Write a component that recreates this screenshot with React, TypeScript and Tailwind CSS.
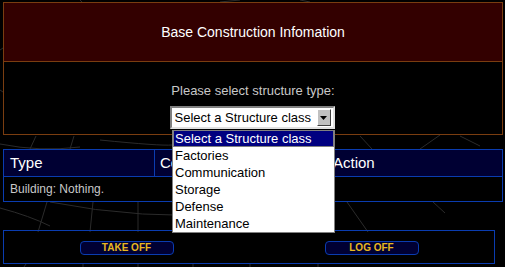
const options = [
  "Select a Structure class",
  "Factories",
  "Communication",
  "Storage",
  "Defense",
  "Maintenance",
];

// faint wireframe globe behind the page
function Backdrop() {
  return (
    <svg
      className="pointer-events-none absolute inset-0"
      width="505"
      height="267"
      viewBox="0 0 505 267"
      fill="none"
      stroke="#2b2b2b"
      strokeWidth="1"
    >
      <path d="M0 208 Q30 216 50 226" />
      <path d="M50 202 Q140 220 240 214 T333 206" />
      <path d="M47 202 L38 232" />
      <path d="M93 202 L90 232" />
      <path d="M138 202 L138 232" />
      <path d="M347 202 L368 232" />
      <path d="M433 202 L445 213" />
      <path d="M0 144 Q40 152 80 147" />
      <path d="M30 149 L36 136" />
      <path d="M70 149 L74 136" />
      <path d="M100 140 Q160 146 172 145" />
      <path d="M360 136 L372 149" />
      <path d="M420 149 L440 135" />
      <path d="M460 136 L480 146" />
      <path d="M24 267 L26 264" />
      <path d="M83 267 L83 264" />
      <path d="M138 267 L138 264" />
      <path d="M193 267 L193 264" />
      <path d="M250 267 L250 264" />
      <path d="M318 267 L318 264" />
      <path d="M0 90 L3 92" />
      <path d="M0 50 L3 48" />
      <path d="M80 0 L82 2" />
      <path d="M220 2 L240 0" />
      <path d="M300 0 L310 2" />
    </svg>
  );
}

function NavButton({ label }: { label: string }) {
  return (
    <button className="flex h-[14px] w-[94px] items-center justify-center rounded-[4px] border border-[#0a3cb0] bg-[#000033] text-[10px] font-bold leading-none text-[#e8b820]">
      {label}
    </button>
  );
}

export default function App() {
  return (
    <div className="relative h-[267px] w-[505px] overflow-hidden bg-black font-['Liberation_Sans',Arial,sans-serif]">
      <Backdrop />

      <div className="relative flex flex-col px-[3px] pt-[2px]">
        {/* construction panel */}
        <div className="flex h-[133px] w-[500px] flex-col border border-[#7a3d10]">
          <div className="flex h-[59px] items-center justify-center border-b border-[#7a3d10] bg-[#330000] pt-[1px] text-[14px] text-white">
            Base Construction Infomation
          </div>
          <div className="flex flex-1 flex-col items-center bg-black pt-[21px]">
            <p className="text-[13px] leading-[15px] text-[#c8c8c8]">
              Please select structure type:
            </p>
            <div className="mt-[8px] ml-[-2px] flex h-[23px] w-[165px] items-center border-2 border-t-[#808080] border-l-[#808080] border-r-[#e0e0e0] border-b-[#e0e0e0] bg-white pl-[3px] pr-[2px]">
              <span className="flex-1 text-[13px] leading-none text-black">
                Select a Structure class
              </span>
              <span className="flex h-[17px] w-[14px] items-center justify-center border border-t-white border-l-white border-r-[#404040] border-b-[#404040] bg-[#c0c0c0]">
                <svg width="7" height="4" viewBox="0 0 7 4">
                  <path d="M0 0 H7 L3.5 4 Z" fill="#000" />
                </svg>
              </span>
            </div>
          </div>
        </div>

        {/* build queue */}
        <div className="mt-[14px] w-[500px] border border-[#0a3cb0]">
          <div className="flex h-[27px] border-b border-[#0a3cb0] bg-[#000033] text-[15px] text-white">
            <div className="flex w-[151px] items-center border-r border-[#0a3cb0] pl-[6px]">
              Type
            </div>
            <div className="flex w-[173px] items-center border-r border-[#0a3cb0] pl-[5px]">
              Completion
            </div>
            <div className="flex flex-1 items-center pl-[5px]">Action</div>
          </div>
          <div className="flex h-[24px] items-center pl-[6px] text-[12px] text-[#c8c8c8]">
            Building: Nothing.
          </div>
        </div>

        {/* navigation */}
        <div className="mt-[28px] grid h-[34px] w-[492px] grid-cols-2 items-center border border-[#0a3cb0]">
          <div className="flex justify-center pt-[1px]">
            <NavButton label="TAKE OFF" />
          </div>
          <div className="flex justify-center pt-[1px]">
            <NavButton label="LOG OFF" />
          </div>
        </div>
      </div>

      {/* open select list */}
      <ul className="absolute left-[172px] top-[130px] w-[163px] border border-t-0 border-[#808080] bg-white">
        {options.map((o, i) => (
          <li
            key={o}
            className={
              i === 0
                ? "h-[17px] border border-[#808080] bg-[#000080] pl-[1px] text-[13px] leading-[15px] text-white"
                : "h-[17px] pl-[2px] text-[13px] leading-[17px] text-black"
            }
          >
            {o}
          </li>
        ))}
      </ul>
    </div>
  );
}
